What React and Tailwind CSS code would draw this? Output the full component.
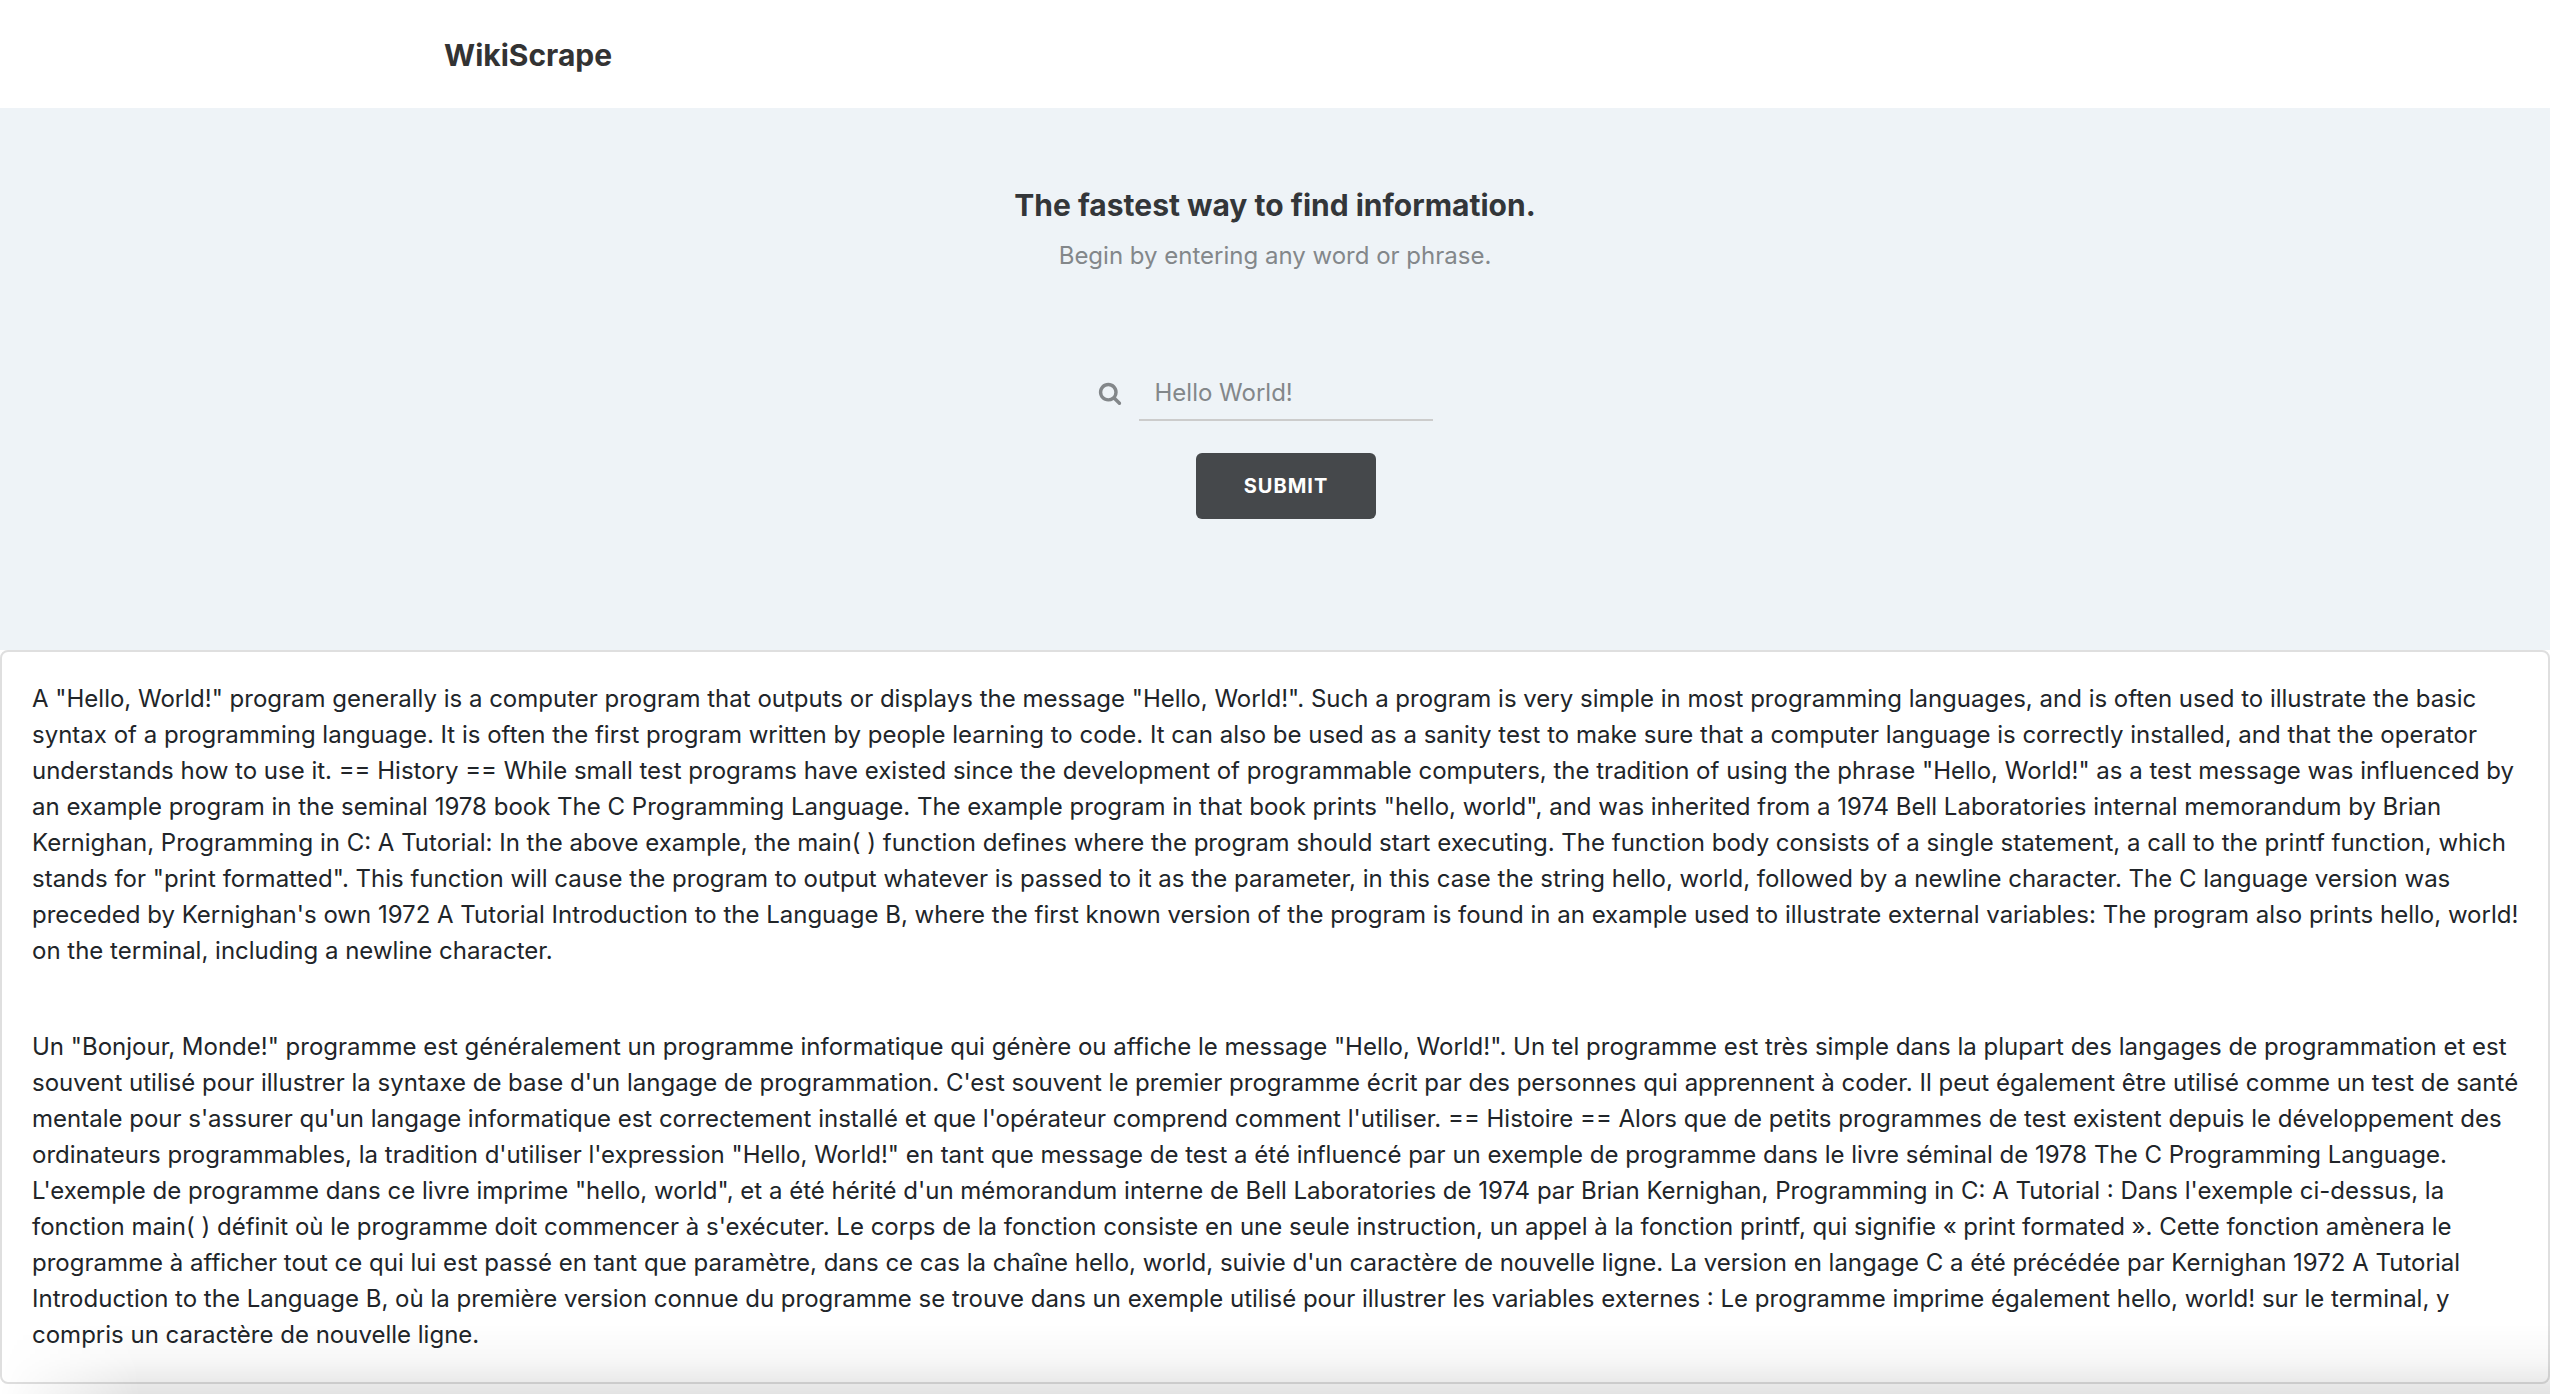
import React from "react";

const english = [
  'A "Hello, World!" program generally is a computer program that outputs or displays the message "Hello, World!". Such a program is very simple in most programming languages, and is often used to illustrate the basic',
  "syntax of a programming language. It is often the first program written by people learning to code. It can also be used as a sanity test to make sure that a computer language is correctly installed, and that the operator",
  'understands how to use it. == History == While small test programs have existed since the development of programmable computers, the tradition of using the phrase "Hello, World!" as a test message was influenced by',
  'an example program in the seminal 1978 book The C Programming Language. The example program in that book prints "hello, world", and was inherited from a 1974 Bell Laboratories internal memorandum by Brian',
  "Kernighan, Programming in C: A Tutorial: In the above example, the main( ) function defines where the program should start executing. The function body consists of a single statement, a call to the printf function, which",
  'stands for "print formatted". This function will cause the program to output whatever is passed to it as the parameter, in this case the string hello, world, followed by a newline character. The C language version was',
  "preceded by Kernighan's own 1972 A Tutorial Introduction to the Language B, where the first known version of the program is found in an example used to illustrate external variables: The program also prints hello, world!",
  "on the terminal, including a newline character.",
];

const french = [
  'Un "Bonjour, Monde!" programme est généralement un programme informatique qui génère ou affiche le message "Hello, World!". Un tel programme est très simple dans la plupart des langages de programmation et est',
  "souvent utilisé pour illustrer la syntaxe de base d'un langage de programmation. C'est souvent le premier programme écrit par des personnes qui apprennent à coder. Il peut également être utilisé comme un test de santé",
  "mentale pour s'assurer qu'un langage informatique est correctement installé et que l'opérateur comprend comment l'utiliser. == Histoire == Alors que de petits programmes de test existent depuis le développement des",
  "ordinateurs programmables, la tradition d'utiliser l'expression \"Hello, World!\" en tant que message de test a été influencé par un exemple de programme dans le livre séminal de 1978 The C Programming Language.",
  "L'exemple de programme dans ce livre imprime \"hello, world\", et a été hérité d'un mémorandum interne de Bell Laboratories de 1974 par Brian Kernighan, Programming in C: A Tutorial : Dans l'exemple ci-dessus, la",
  "fonction main( ) définit où le programme doit commencer à s'exécuter. Le corps de la fonction consiste en une seule instruction, un appel à la fonction printf, qui signifie « print formated ». Cette fonction amènera le",
  "programme à afficher tout ce qui lui est passé en tant que paramètre, dans ce cas la chaîne hello, world, suivie d'un caractère de nouvelle ligne. La version en langage C a été précédée par Kernighan 1972 A Tutorial",
  "Introduction to the Language B, où la première version connue du programme se trouve dans un exemple utilisé pour illustrer les variables externes : Le programme imprime également hello, world! sur le terminal, y",
  "compris un caractère de nouvelle ligne.",
];

function Article({ lines, lang }) {
  return (
    <p lang={lang}>
      {lines.map((line) => (
        <React.Fragment key={line}>
          {line}
          <br />
        </React.Fragment>
      ))}
    </p>
  );
}

function SearchIcon() {
  return (
    <svg viewBox="0 0 1792 1792" className="size-6" fill="currentColor" role="img" aria-label="Search phrase">
      <path d="M1216 832q0-185-131.5-316.5t-316.5-131.5-316.5 131.5-131.5 316.5 131.5 316.5 316.5 131.5 316.5-131.5 131.5-316.5zm512 832q0 52-38 90t-90 38q-54 0-90-38l-343-342q-179 124-399 124-143 0-273.5-55.5t-225-150-150-225-55.5-273.5 55.5-273.5 150-225 225-150 273.5-55.5 273.5 55.5 225 150 150 225 55.5 273.5q0 220-124 399l343 343q37 37 37 90z" />
    </svg>
  );
}

export default function App() {
  return (
    <div className="relative min-h-screen overflow-hidden bg-white font-['Inter',sans-serif] text-2xl leading-9 text-[#212529]">
      <header className="bg-white pt-[33px] pb-[31px]">
        <div className="mx-auto max-w-[1662px]">
          <a href="#" className="block text-[30px] leading-11 font-bold text-[#333333]">
            WikiScrape
          </a>
        </div>
      </header>

      <main>
        <section className="flex flex-col items-center bg-[#eef3f7] pt-[75px] pb-[131px]">
          <h1 className="text-[30px] leading-11 font-bold text-[#333639]">
            The fastest way to find information.
          </h1>
          <p className="mt-[11px] text-[#83878a]">Begin by entering any word or phrase.</p>

          <form className="mt-[91px] flex flex-col items-center" onSubmit={(e) => e.preventDefault()}>
            <div className="flex items-center gap-[17px] pr-5">
              <label htmlFor="phrase" className="text-[#83878a]">
                <SearchIcon />
              </label>
              <input
                id="phrase"
                type="text"
                placeholder="Hello World!"
                className="h-14 w-[294px] border-b-2 border-[#cccccc] px-4 outline-none placeholder:text-[#83878a]"
              />
            </div>
            <button
              type="submit"
              className="mt-8 ml-[22px] h-[66px] w-[180px] rounded-md bg-[#45484b] text-xl font-bold tracking-wider text-white"
            >
              SUBMIT
            </button>
          </form>
        </section>

        <section className="flex flex-col gap-15 rounded-lg border-2 border-[#dfdfdf] bg-white px-[30px] py-[29px] whitespace-nowrap">
          <Article lines={english} lang="en" />
          <Article lines={french} lang="fr" />
        </section>
      </main>

      <div className="pointer-events-none absolute inset-x-0 bottom-0 h-[70px] bg-linear-to-b from-transparent via-black/3 to-black/11 mask-l-from-[calc(100%-140px)]" />
    </div>
  );
}
